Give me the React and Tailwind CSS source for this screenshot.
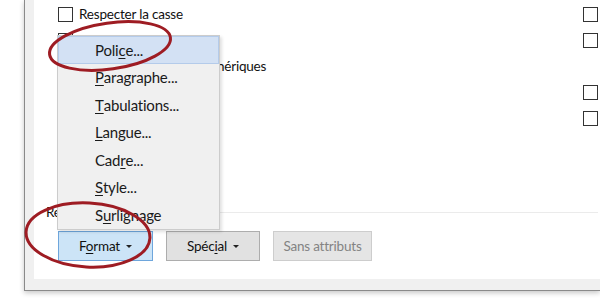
import React from 'react';

const font = { fontFamily: 'Lato, "Noto Sans", "Liberation Sans", sans-serif' };

function Box() {
  return <span className="block w-[15px] h-[15px] border border-[#333333] bg-white shrink-0" />;
}

function Caret() {
  return <span className="inline-block ml-[6px] w-0 h-0 border-l-[3px] border-r-[3px] border-t-[3px] border-l-transparent border-r-transparent border-t-[#222222] align-middle" />;
}

// label text with one underlined mnemonic letter
function M({ text, at }) {
  return (
    <>
      {text.slice(0, at)}
      <span className="underline underline-offset-2 decoration-1">{text[at]}</span>
      {text.slice(at + 1)}
    </>
  );
}

// labels of rows 2, 4 and 5 sit fully behind the open menu
const rows = [
  { label: 'Respecter la casse', right: true },
  { label: '', right: true },
  { label: 'Utiliser les caractères génériques', right: false },
  { label: '', right: true },
  { label: '', right: true },
];

const menu = [
  ['Police...', 4],
  ['Paragraphe...', 0],
  ['Tabulations...', 0],
  ['Langue...', 0],
  ['Cadre...', 3],
  ['Style...', 0],
  ['Surlignage', 1],
];

export default function App() {
  return (
    <div className="relative w-[600px] h-[304px] overflow-hidden bg-white text-[13.5px] tracking-[-0.2px] text-[#111111]" style={font}>
      {/* dialog window */}
      <div className="ml-[24px] h-[291px] border-l border-b border-[#8a8a8a] bg-[#f0f0f0] shadow-[0_2px_5px_rgba(0,0,0,0.22)]">
        <div className="ml-[9px] h-[279px] bg-white flex flex-col pr-[2px]">
          <div className="pt-[7px] flex flex-col">
            {rows.map((r, i) => (
              <div key={i} className="h-[26px] flex items-start pl-[24px]">
                <Box />
                {r.label && <span className="ml-[6px] leading-[15px]">{r.label}</span>}
                {r.right && <span className="ml-auto"><Box /></span>}
              </div>
            ))}
          </div>

          <div className="mt-[67px] h-[16px] flex items-center pl-[12px]">
            <span className="leading-[16px]">Re</span>
            <span className="flex-1 ml-[60px] h-px bg-[#ebebeb]" />
          </div>

          <div className="mt-[11px] flex gap-[13px] pl-[24px]">
            <button className="w-[95px] h-[30px] bg-[#cce4f7] border border-[#6ea6dc] flex items-center justify-center">
              <span><M text="Format" at={1} /></span><Caret />
            </button>
            <button className="w-[94px] h-[30px] bg-[#e1e1e1] border border-[#adadad] flex items-center justify-center">
              <span><M text="Spécial" at={4} /></span><Caret />
            </button>
            <button className="w-[99px] h-[30px] bg-[#e5e5e5] border border-[#cdcdcd] text-[#838383] flex items-center justify-center">
              Sans attributs
            </button>
          </div>
        </div>
      </div>

      {/* open dropdown menu */}
      <div className="absolute left-[57px] top-[35px] w-[163px] border border-[#cccccc] bg-[#f0f0f0] shadow-[2px_2px_3px_rgba(0,0,0,0.12)] text-[15px] text-[#1a1a1a]">
        {menu.map(([t, at], i) => (
          <div
            key={i}
            className={`h-[27.5px] flex items-center ${i === 0 ? 'bg-[#d3e1f4] border border-[#b4cbea] pl-[36px]' : 'pl-[37px]'}`}
          >
            <M text={t} at={at} />
          </div>
        ))}
      </div>

      {/* red annotation circles */}
      <svg className="absolute inset-0 pointer-events-none" width="600" height="304">
        <ellipse cx="110" cy="46" rx="61" ry="23" fill="none" stroke="#9e1c23" strokeWidth="3" transform="rotate(-8 110 46)" />
        <ellipse cx="88" cy="235" rx="62" ry="32" fill="none" stroke="#9e1c23" strokeWidth="3" transform="rotate(3 88 235)" />
      </svg>
    </div>
  );
}
